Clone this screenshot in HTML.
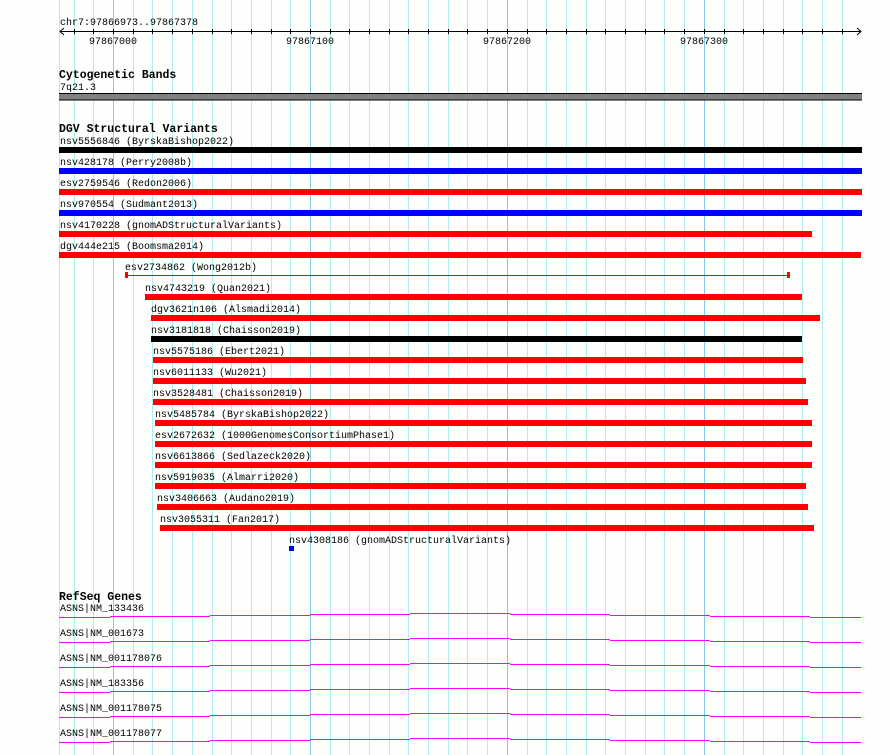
<!DOCTYPE html>
<html><head><meta charset="utf-8"><style>
html,body{margin:0;padding:0;background:#fdfffd;}
svg{display:block}
text{font-family:"Liberation Mono",monospace;font-size:10px;fill:#000}
.b{font-weight:bold;font-size:11.5px}
</style></head><body>
<svg width="890" height="755" xmlns="http://www.w3.org/2000/svg">
<rect width="890" height="755" fill="#fdfffd"/>
<g stroke="#b0ecf0" stroke-width="1">
<line x1="59.5" y1="0" x2="59.5" y2="755"/>
<line x1="74.5" y1="0" x2="74.5" y2="755"/><line x1="93.5" y1="0" x2="93.5" y2="755"/><line x1="133.5" y1="0" x2="133.5" y2="755"/><line x1="152.5" y1="0" x2="152.5" y2="755"/><line x1="172.5" y1="0" x2="172.5" y2="755"/><line x1="192.5" y1="0" x2="192.5" y2="755"/><line x1="212.5" y1="0" x2="212.5" y2="755"/><line x1="231.5" y1="0" x2="231.5" y2="755"/><line x1="251.5" y1="0" x2="251.5" y2="755"/><line x1="271.5" y1="0" x2="271.5" y2="755"/><line x1="290.5" y1="0" x2="290.5" y2="755"/><line x1="330.5" y1="0" x2="330.5" y2="755"/><line x1="349.5" y1="0" x2="349.5" y2="755"/><line x1="369.5" y1="0" x2="369.5" y2="755"/><line x1="389.5" y1="0" x2="389.5" y2="755"/><line x1="408.5" y1="0" x2="408.5" y2="755"/><line x1="428.5" y1="0" x2="428.5" y2="755"/><line x1="448.5" y1="0" x2="448.5" y2="755"/><line x1="467.5" y1="0" x2="467.5" y2="755"/><line x1="487.5" y1="0" x2="487.5" y2="755"/><line x1="527.5" y1="0" x2="527.5" y2="755"/><line x1="546.5" y1="0" x2="546.5" y2="755"/><line x1="566.5" y1="0" x2="566.5" y2="755"/><line x1="586.5" y1="0" x2="586.5" y2="755"/><line x1="605.5" y1="0" x2="605.5" y2="755"/><line x1="625.5" y1="0" x2="625.5" y2="755"/><line x1="645.5" y1="0" x2="645.5" y2="755"/><line x1="664.5" y1="0" x2="664.5" y2="755"/><line x1="684.5" y1="0" x2="684.5" y2="755"/><line x1="724.5" y1="0" x2="724.5" y2="755"/><line x1="743.5" y1="0" x2="743.5" y2="755"/><line x1="763.5" y1="0" x2="763.5" y2="755"/><line x1="783.5" y1="0" x2="783.5" y2="755"/><line x1="802.5" y1="0" x2="802.5" y2="755"/><line x1="822.5" y1="0" x2="822.5" y2="755"/><line x1="842.5" y1="0" x2="842.5" y2="755"/>
</g>
<g stroke="#88c8e8" stroke-width="1">
<line x1="113.5" y1="0" x2="113.5" y2="755"/><line x1="310.5" y1="0" x2="310.5" y2="755"/><line x1="507.5" y1="0" x2="507.5" y2="755"/><line x1="704.5" y1="0" x2="704.5" y2="755"/>
</g>
<!-- ruler -->
<text x="60" y="25">chr7:97866973..97867378</text>
<g stroke="#000" stroke-width="1">
<line x1="60" y1="31.5" x2="861" y2="31.5"/>
<polyline points="64,28 60,31.5 64,35" fill="none"/>
<polyline points="857,28 861,31.5 857,35" fill="none"/>
<path d="M74.5 29v5M93.5 29v5M113.5 29v5M133.5 29v5M152.5 29v5M172.5 29v5M192.5 29v5M212.5 29v5M231.5 29v5M251.5 29v5M271.5 29v5M290.5 29v5M310.5 29v5M330.5 29v5M349.5 29v5M369.5 29v5M389.5 29v5M408.5 29v5M428.5 29v5M448.5 29v5M467.5 29v5M487.5 29v5M507.5 29v5M527.5 29v5M546.5 29v5M566.5 29v5M586.5 29v5M605.5 29v5M625.5 29v5M645.5 29v5M664.5 29v5M684.5 29v5M704.5 29v5M724.5 29v5M743.5 29v5M763.5 29v5M783.5 29v5M802.5 29v5M822.5 29v5M842.5 29v5"/>
</g>
<text x="89" y="44">97867000</text>
<text x="286" y="44">97867100</text>
<text x="483" y="44">97867200</text>
<text x="680" y="44">97867300</text>
<!-- cytobands -->
<text class="b" x="59" y="78">Cytogenetic Bands</text>
<text x="60" y="90">7q21.3</text>
<rect x="59" y="93" width="803" height="7" fill="#808080"/>
<line x1="59" y1="93.5" x2="862" y2="93.5" stroke="#000"/>
<line x1="59" y1="100" x2="862" y2="100" stroke="#000"/>
<!-- DGV -->
<text class="b" x="59" y="132">DGV Structural Variants</text>
<text x="60" y="144">nsv5556846 (ByrskaBishop2022)</text><rect x="59" y="147" width="803" height="6" fill="#000"/>
<text x="60" y="165">nsv428178 (Perry2008b)</text><rect x="59" y="168" width="803" height="6" fill="#0000ff"/>
<text x="60" y="186">esv2759546 (Redon2006)</text><rect x="59" y="189" width="803" height="6" fill="#ff0000"/>
<text x="60" y="207">nsv970554 (Sudmant2013)</text><rect x="59" y="210" width="803" height="6" fill="#0000ff"/>
<text x="60" y="228">nsv4170228 (gnomADStructuralVariants)</text><rect x="59" y="231" width="753" height="6" fill="#ff0000"/>
<text x="60" y="249">dgv444e215 (Boomsma2014)</text><rect x="59" y="252" width="802" height="6" fill="#ff0000"/>
<text x="125" y="270">esv2734862 (Wong2012b)</text>
<rect x="126" y="275" width="663" height="1" fill="#ff0000"/><rect x="125" y="272" width="3" height="6" fill="#ff0000"/><rect x="787" y="272" width="3" height="6" fill="#ff0000"/>
<text x="145" y="291">nsv4743219 (Quan2021)</text><rect x="145" y="294" width="657" height="6" fill="#ff0000"/>
<text x="151" y="312">dgv3621n106 (Alsmadi2014)</text><rect x="151" y="315" width="669" height="6" fill="#ff0000"/>
<text x="151" y="333">nsv3181818 (Chaisson2019)</text><rect x="151" y="336" width="651" height="6" fill="#000"/>
<text x="153" y="354">nsv5575186 (Ebert2021)</text><rect x="153" y="357" width="650" height="6" fill="#ff0000"/>
<text x="153" y="375">nsv6011133 (Wu2021)</text><rect x="153" y="378" width="653" height="6" fill="#ff0000"/>
<text x="153" y="396">nsv3528481 (Chaisson2019)</text><rect x="153" y="399" width="655" height="6" fill="#ff0000"/>
<text x="155" y="417">nsv5485784 (ByrskaBishop2022)</text><rect x="155" y="420" width="657" height="6" fill="#ff0000"/>
<text x="155" y="438">esv2672632 (1000GenomesConsortiumPhase1)</text><rect x="155" y="441" width="657" height="6" fill="#ff0000"/>
<text x="155" y="459">nsv6613866 (Sedlazeck2020)</text><rect x="155" y="462" width="657" height="6" fill="#ff0000"/>
<text x="155" y="480">nsv5919035 (Almarri2020)</text><rect x="155" y="483" width="651" height="6" fill="#ff0000"/>
<text x="157" y="501">nsv3406663 (Audano2019)</text><rect x="157" y="504" width="651" height="6" fill="#ff0000"/>
<text x="160" y="522">nsv3055311 (Fan2017)</text><rect x="160" y="525" width="654" height="6" fill="#ff0000"/>
<text x="289" y="543">nsv4308186 (gnomADStructuralVariants)</text><rect x="289" y="546" width="5" height="5" fill="#0000ff"/>
<!-- RefSeq -->
<text class="b" x="59" y="600">RefSeq Genes</text>
<g fill="#ff00ff">
<g id="g1">
<path d="M59 617.5h51M110 616.5h100M210 615.5h100M310 614.5h100M410 613.5h100M510 614.5h100M610 615.5h100M710 616.5h100M810 617.5h51" stroke="#ff00ff" stroke-width="1" fill="none"/>
</g>
<use href="#g1" y="25"/><use href="#g1" y="50"/><use href="#g1" y="75"/><use href="#g1" y="100"/><use href="#g1" y="125"/>
</g>
<text x="60" y="611">ASNS|NM_133436</text>
<text x="60" y="636">ASNS|NM_001673</text>
<text x="60" y="661">ASNS|NM_001178076</text>
<text x="60" y="686">ASNS|NM_183356</text>
<text x="60" y="711">ASNS|NM_001178075</text>
<text x="60" y="736">ASNS|NM_001178077</text>
</svg>
</body></html>
